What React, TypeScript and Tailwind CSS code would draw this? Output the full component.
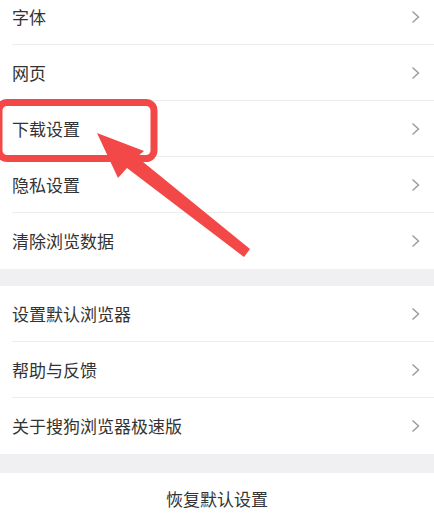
const groupOne = ['字体', '网页', '下载设置', '隐私设置', '清除浏览数据'];
const groupTwo = ['设置默认浏览器', '帮助与反馈', '关于搜狗浏览器极速版'];

function Chevron() {
  return (
    <svg width="9" height="14" viewBox="0 0 9 14" className="shrink-0">
      <path d="M1.5 1.5 L7.5 7 L1.5 12.5" fill="none" stroke="#9a9a9a" strokeWidth="1.4" />
    </svg>
  );
}

function Row({ label, last }: { label: string; last: boolean }) {
  return (
    <div className="h-[56px] pl-[12px] flex">
      <div
        className={`flex-1 flex items-center justify-between pr-[14px] ${
          last ? '' : 'border-b border-[#ececec]'
        }`}
      >
        <span className="text-[17px] text-[#333333]">{label}</span>
        <Chevron />
      </div>
    </div>
  );
}

export default function App() {
  return (
    <div
      className="relative w-full h-[520px] overflow-hidden bg-[#f0f0f2]"
      style={{ fontFamily: '"Noto Sans CJK SC", "Noto Sans", sans-serif' }}
    >
      <div className="bg-white -mt-[11px]">
        {groupOne.map((label, i) => (
          <Row key={label} label={label} last={i === groupOne.length - 1} />
        ))}
      </div>
      <div className="h-[17px]" />
      <div className="bg-white">
        {groupTwo.map((label, i) => (
          <Row key={label} label={label} last={i === groupTwo.length - 1} />
        ))}
      </div>
      <div className="h-[19px]" />
      <div className="bg-white h-[52px] flex items-center justify-center">
        <span className="text-[17px] text-[#333333]">恢复默认设置</span>
      </div>

      <svg
        className="absolute inset-0 pointer-events-none"
        width="434"
        height="520"
        viewBox="0 0 434 520"
      >
        <rect x="-1" y="102.5" width="155" height="56" rx="8" fill="none" stroke="#f34848" strokeWidth="7" />
        <polygon
          points="97,133 144,151 137,157 250,249 244,257 127,168 118,178"
          fill="#f34848"
        />
      </svg>
    </div>
  );
}
